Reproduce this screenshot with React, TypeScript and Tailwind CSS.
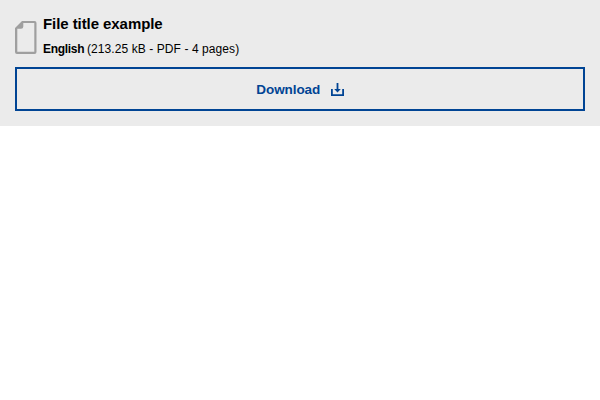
export default function App() {
  return (
    <main className="bg-[#ebebeb] h-[126px] px-[15px] pt-[15px] pb-[15px] font-['Liberation_Sans',Arial,sans-serif] text-black">
      <div className="flex h-[52px]">
        <svg className="mt-1.5 mr-1.5 h-[33px] w-[22px] shrink-0" viewBox="0 0 22 33">
          <path fill="#9f9f9f" fillRule="evenodd" d="M7 0H19.5Q21.5 0 21.5 2V31Q21.5 33 19.5 33H2Q0 33 0 31V7ZM8.3 2V5.5Q8.3 7.8 6 7.8H2.3V30.8H19.3V2Z" />
        </svg>
        <div>
          <h1 className="text-[15px] font-bold leading-[18px] tracking-[-0.07px]">File title example</h1>
          <p className="mt-[7px] text-xs leading-[18px]"><strong className="mr-[-0.6px] tracking-[-0.3px]">English</strong> <span className="tracking-[0.08px]">(213.25 kB - PDF - 4 pages)</span></p>
        </div>
      </div>
      <button className="flex h-11 w-full items-center justify-center border-2 border-[#004494] pl-[0.5px] text-[13.5px] font-bold text-[#004494]">
        <span className="pt-[2px] tracking-[-0.07px]">Download</span>
        <svg className="ml-[11px] h-[14px] w-[13px]" viewBox="0 0 13 14">
          <path fill="#004494" d="M5.6 1H7.4V7H9.8L6.5 10.4L3.2 7H5.6ZM0 7H1.8V12.2H11.2V7H13V14H0Z" />
        </svg>
      </button>
    </main>
  );
}
